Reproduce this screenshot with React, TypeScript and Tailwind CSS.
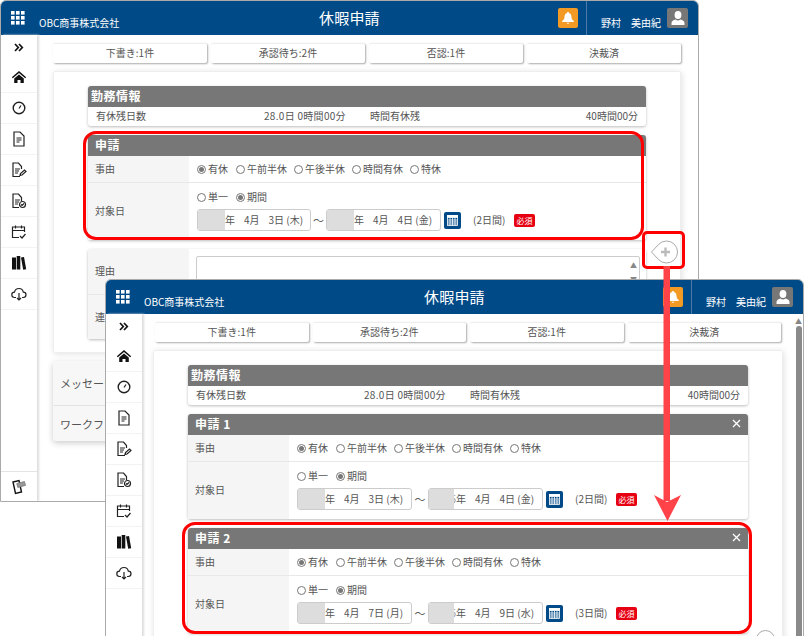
import React from "react";

const Dots = () => (
  <svg width="14" height="14" viewBox="0 0 14 14" fill="#fff">
    {[0, 5, 10].flatMap((y) => [0, 5, 10].map((x) => <rect key={x + "-" + y} x={x} y={y} width="3.6" height="3.6" />))}
  </svg>
);
const Bell = () => (
  <svg width="14" height="14" viewBox="0 0 14 14" fill="#fff">
    <path d="M7 1c-.7 0-1 .5-1 1C4.300 2.600 3.600 4 3.500 6c-.1 2-1 3-2.300 4v1h11.600v-1C11.500 9 10.600 8 10.500 6 10.400 4 9.700 2.600 8 2c0-.5-.3-1-1-1zM5.500 11.800a1.600 1.600 0 0 0 3 0z" />
  </svg>
);
const User = () => (
  <svg width="16" height="16" viewBox="0 0 16 16" fill="#fff">
    <ellipse cx="8" cy="5" rx="3.400" ry="4" />
    <path d="M1.500 15v-2c0-2 2-3 4-3.500.8.700 1.600 1 2.500 1s1.700-.3 2.500-1c2 .5 4 1.500 4 3.500v2z" />
  </svg>
);
const Cal = () => (
  <svg width="11" height="12" viewBox="0 0 11 12" fill="none" stroke="#fff" strokeWidth="0.8">
    <rect x="0.500" y="1.500" width="10" height="10" />
    <rect x="0.500" y="1.500" width="10" height="2" fill="#fff" />
    <path d="M0.500 6h10M0.500 8h10M0.500 10h10M3 3.500v8M5.500 3.500v8M8 3.500v8" />
  </svg>
);
const Chevrons = () => (
  <svg width="10" height="9" viewBox="0 0 10 9" fill="none" stroke="#111" strokeWidth="1.700">
    <path d="m1 1 3.300 3.500L1 8M5 1l3.300 3.500L5 8" />
  </svg>
);

const stroke = { fill: "none", stroke: "#222", strokeWidth: 1.2 };
const sideIcons = [
  <svg key="home" width="16" height="16" viewBox="0 0 16 16" fill="#111"><path d="M8 2 .8 8.200l1 1L8 4l6.200 5.200 1-1zM3.200 9.500 8 5.500l4.800 4V14H9.500v-3h-3v3H3.200z" /></svg>,
  <svg key="clock" width="16" height="16" viewBox="0 0 16 16" {...stroke}><circle cx="8" cy="8" r="5.800" strokeWidth="1.400" /><path d="M8 8.500 10 5.500" /></svg>,
  <svg key="doc" width="16" height="16" viewBox="0 0 16 16" {...stroke}><path d="M3 1h6l4 4v10H3z" /><path d="M5.500 7h5M5.500 9h5M5.500 11h3" strokeWidth="1" /></svg>,
  <svg key="edit" width="16" height="16" viewBox="0 0 16 16" {...stroke}><path d="M9 14.500H2V1h5.500l3 3.500V7" /><path d="M4 7h5M4 9h4M4 11h3" /><path d="m9 13.500.5-2 4-3.500 1.500 1.500-4 3.500z" /></svg>,
  <svg key="check" width="16" height="16" viewBox="0 0 16 16" {...stroke}><path d="M8 14.500H2V1h5.500l3 3.500V8" /><path d="M4 7h5M4 9h4M4 11h3" /><circle cx="11.500" cy="11.500" r="3" /><path d="m10 11.500 1 1 2-2" /></svg>,
  <svg key="cal" width="16" height="16" viewBox="0 0 16 16" {...stroke}><path d="M8 13.500H1.500V3h12v5M1.500 6.500h12M4.500 1.500v3M10.500 1.500v3" /><path d="m9 12 2 2 3.500-4" /></svg>,
  <svg key="books" width="16" height="16" viewBox="0 0 16 16" fill="#111"><rect x="1" y="2.500" width="4" height="12" /><rect x="5.700" y="1" width="3.600" height="13.500" /><path d="m10 2.500 3-.5 2.200 12.200-3 .5z" /></svg>,
  <svg key="cloud" width="16" height="16" viewBox="0 0 16 16" {...stroke}><path d="M5 11.500H3.500a2.700 2.700 0 0 1 0-5.400C4 3.800 6 2.500 8 2.500c2.200 0 3.900 1.500 4.300 3.600a2.700 2.700 0 0 1 0 5.400H11" /><path d="M8 7v7M6 12l2 2 2-2" /></svg>,
];
const Phone = () => (
  <svg width="16" height="16" viewBox="0 0 16 16" fill="none" stroke="#111" strokeWidth="1.400">
    <path d="m2 3 6-1.500 2.500 11.500-6 1.500z" />
    <rect x="6" y="3.500" width="8" height="4" fill="#999" stroke="#777" strokeWidth="0.700" transform="rotate(-15 10 5)" />
  </svg>
);

const Radio = ({ on, label, first }: { on?: boolean; label: string; first?: boolean }) => (
  <span className={first ? "flex items-center gap-[2px] mr-[8px]" : "flex items-center gap-[2px] mr-[7px]"}>
    <span className="w-[9px] h-[9px] rounded-full border border-[#777] bg-white flex items-center justify-center">
      {on && <span className="w-[5px] h-[5px] rounded-full bg-[#777]" />}
    </span>
    <span>{label}</span>
  </span>
);

const DateBox = ({ w, text, peek }: { w: number; text: string; peek?: boolean }) => (
  <div className="h-[22px] border border-[#ccc] rounded-[3px] flex items-center overflow-hidden bg-white" style={{ width: w }}>
    <span className={peek ? "w-[25px] h-[20px] bg-[#ddd] shrink-0" : "w-[27px] h-[20px] bg-[#ddd] shrink-0"} />
    {peek && <span className="w-[2px] overflow-hidden flex justify-end text-[#999]">5</span>}
    <span className="whitespace-pre">{text}</span>
  </div>
);

const DateRow = ({ a, b, days, peek }: { a: string; b: string; days: string; peek?: boolean }) => (
  <div className="flex items-center">
    <DateBox w={peek ? 115 : 114} text={a} />
    <span className={peek ? "w-[16px] text-center text-[11px]" : "w-[15px] text-center text-[11px]"}>～</span>
    <DateBox w={115} text={b} peek={peek} />
    <span className="w-[17px] h-[17px] ml-[3px] bg-[#004b87] rounded-[2px] flex items-center justify-center"><Cal /></span>
    <span className="ml-[12px] w-[41px]">{days}</span>
    <span className="w-[21px] h-[13px] bg-[#e60012] rounded-[2px] text-white text-[8px] leading-[13px] text-center">必須</span>
  </div>
);

const SecHead = ({ title, close, tight }: { title: string; close?: boolean; tight?: boolean }) => (
  <div className={tight ? "h-[21px] pb-[2px] bg-[#777] rounded-t-[3px] text-white font-bold text-[12px] tracking-[0.5px] flex items-center justify-between pl-[3px] pr-[7px]" : "h-[21px] pb-[2px] bg-[#777] rounded-t-[3px] text-white font-bold text-[12px] tracking-[0.5px] flex items-center justify-between pl-[7px] pr-[7px]"}>
    <span>{title}</span>
    {close && (
      <svg width="9" height="9" viewBox="0 0 9 9" stroke="#fff" strokeWidth="1.300"><path d="m1 1 7 7M8 1 1 8" /></svg>
    )}
  </div>
);

const Label = ({ children }: { children: string }) => (
  <div className="w-[101px] shrink-0 bg-[#f5f5f5] pl-[7px] pb-[1px] flex items-center">{children}</div>
);

const Info = () => (
  <section className="rounded-[3px] bg-white shadow-[0_1px_3px_#bbb] mb-[9px]">
    <SecHead title="勤務情報" tight />
    <div className="h-[19px] pb-[1px] flex items-center pl-[8px] pr-[8px]">
      <span className="w-[168px]">有休残日数</span>
      <span className="w-[106px] tracking-[0.300px]">28.0日 0時間00分</span>
      <span>時間有休残</span>
      <span className="ml-auto">40時間00分</span>
    </div>
  </section>
);

const Request = ({ title, close, a, b, days, peek }: { title: string; close?: boolean; a: string; b: string; days: string; peek?: boolean }) => (
  <section className="rounded-[3px] bg-white shadow-[0_1px_3px_#bbb] mb-[9px]">
    <SecHead title={title} close={close} />
    <div className="h-[27px] flex border-b border-[#e8e8e8]">
      <Label>事由</Label>
      <div className="flex items-center pl-[8px]">
        <Radio on first label="有休" />
        <Radio label="午前半休" />
        <Radio label="午後半休" />
        <Radio label="時間有休" />
        <Radio label="特休" />
      </div>
    </div>
    <div className="h-[57px] flex">
      <Label>対象日</Label>
      <div className="pl-[8px] pt-[8px]">
        <div className="flex items-center h-[12px] mb-[6px]">
          <Radio first label="単一" />
          <Radio on label="期間" />
        </div>
        <DateRow a={a} b={b} days={days} peek={peek} />
      </div>
    </div>
  </section>
);

const Window = ({ className, front, children }: { className: string; front?: boolean; children: React.ReactNode }) => (
  <div className={"absolute w-[699px] bg-white border border-[#aaa] rounded-t-[6px] overflow-hidden flex flex-col text-[10px] leading-[14px] text-[#555] " + className}>
    <header className="h-[34px] shrink-0 bg-[#004b87] text-white flex items-center">
      <div className="w-[318px] flex items-center pl-[10px]">
        <Dots />
        <span className="ml-[14px] mt-[9px] text-[10px]">OBC商事株式会社</span>
      </div>
      <div className="w-[239px] text-[15px] tracking-[0.200px]">休暇申請</div>
      <div className="w-[20px] h-[20px] bg-[#f39a25] rounded-[2px] flex items-center justify-center"><Bell /></div>
      <div className="w-[1px] h-[34px] bg-[#4a7ba8] ml-[8px]" />
      <div className="ml-[14px] mt-[9px] w-[66px] text-[10px] whitespace-pre">野村　美由紀</div>
      <div className="w-[21px] h-[20px] bg-[#777] rounded-[2px] flex items-center justify-center"><User /></div>
    </header>
    <div className="flex flex-1 min-h-0">
      <aside className="w-[36px] shrink-0 shadow-[2px_0_2px_#ddd] flex flex-col justify-between z-10 bg-white">
        <div>
          <div className="h-[27px] flex items-center justify-center pb-[2px]"><Chevrons /></div>
          {sideIcons.map((ic, i) => (
            <div key={i} className="h-[31px] flex items-center justify-center border-b border-[#f3f3f3]">{ic}</div>
          ))}
        </div>
        {!front && (
          <div className="h-[30px] border-t border-[#e4e4e4] flex items-center justify-center"><Phone /></div>
        )}
      </aside>
      {children}
    </div>
  </div>
);

const Tabs = ({ className }: { className: string }) => (
  <div className={"grid grid-cols-4 gap-[4px] mb-[8px] " + className}>
    {["下書き:1件", "承認待ち:2件", "否認:1件", "決裁済"].map((t) => (
      <div key={t} className="h-[20px] pb-[2px] bg-white rounded-[2px] shadow-[1px_1px_2px_#aaa] border-t border-[#eee] flex items-center justify-center">{t}</div>
    ))}
  </div>
);

const AddButton = () => (
  <svg width="28" height="26" viewBox="0 0 28 26" fill="#fff" stroke="#aaa" strokeWidth="1">
    <path d="M1.500 13 8.500 5.500A11 11 0 1 1 8.500 20.500z" />
    <path d="M15.500 8.500v9M11 13h9" stroke="#bbb" strokeWidth="2.400" />
  </svg>
);

export default function App() {
  return (
    <div className="relative w-[804px] h-[636px] overflow-hidden bg-white font-['Noto_Sans_CJK_JP','Noto_Sans',sans-serif]">
      <Window className="left-0 top-0 h-[502px]">
        <main className="flex-1 pl-[16px] pr-[17px] pt-[8px]">
          <Tabs className="" />
          <div className="relative border border-[#eee] rounded-[2px] shadow-[1px_1px_6px_#e0e0e0] px-[34px] pt-[14px] h-[282px] mb-[8px]">
            <Info />
            <Request title="申請" a="年    4月    3日 (木)" b="年    4月    4日 (金)" days="(2日間)" />
            <section className="rounded-[3px] shadow-[0_1px_3px_#bbb]">
              <div className="h-[46px] flex border-b border-[#e8e8e8]">
                <Label>理由</Label>
                <div className="flex-1 pl-[7px] pr-[6px] pt-[7px]">
                  <div className="h-[40px] border border-[#ccc] rounded-[2px] flex flex-col items-end pr-[2px] pt-[1px] text-[7px] leading-[14px] text-[#888]">
                    <span>▲</span>
                    <span>▼</span>
                  </div>
                </div>
              </div>
              <div className="h-[44px] flex">
                <Label>連絡先</Label>
              </div>
            </section>
            <div className="absolute right-[2px] top-[167px]"><AddButton /></div>
          </div>
          <div className="rounded-[3px] bg-[#f7f7f7] shadow-[0_2px_6px_#ccc] h-[80px]">
            <div className="h-[45px] pl-[7px] flex items-center text-[11px] border-b border-[#e4e4e4]">メッセージ</div>
            <div className="h-[35px] pl-[7px] flex items-center text-[11px]">ワークフロー</div>
          </div>
        </main>
      </Window>

      <Window front className="left-[105px] top-[279px] h-[400px]">
        <main className="relative flex-1 pl-[11px] pr-[20px] pt-[8px]">
          <Tabs className="mx-[2px]" />
          <div className="relative border border-[#eee] rounded-[2px] shadow-[1px_1px_6px_#e0e0e0] px-[34px] pt-[14px] h-[320px]">
            <Info />
            <Request title="申請 1" close a="年    4月    3日 (木)" b="年    4月    4日 (金)" days="(2日間)" peek />
            <Request title="申請 2" close a="年    4月    7日 (月)" b="年    4月    9日 (水)" days="(3日間)" peek />
            <div className="absolute left-[602px] top-[279px] w-[19px] h-[19px] rounded-full border border-[#aaa] bg-white" />
          </div>
          <div className="absolute right-[1px] top-0 w-[7px] h-full flex flex-col items-center pt-[3px]">
            <span className="text-[7px] leading-[8px] text-[#888]">▲</span>
            <span className="w-[6px] flex-1 mt-[1px] rounded-[3px] bg-[#8a8a8a]" />
          </div>
        </main>
      </Window>

      <div className="absolute left-[83px] top-[131px] w-[561px] h-[109px] border-[3px] border-[#f00] rounded-[13px]" />
      <div className="absolute left-[642px] top-[231px] w-[43px] h-[38px] border-[3px] border-[#f00] rounded-[5px]" />
      <div className="absolute left-[182px] top-[522px] w-[570px] h-[112px] border-[3px] border-[#f00] rounded-[13px]" />
      <svg className="absolute left-[650px] top-[266px]" width="36" height="258" viewBox="0 0 36 258" fill="#ff4348">
        <rect x="13.500" y="0" width="6.500" height="235" />
        <path d="M4 229 17 236 31 229 17.500 255z" />
      </svg>
    </div>
  );
}
